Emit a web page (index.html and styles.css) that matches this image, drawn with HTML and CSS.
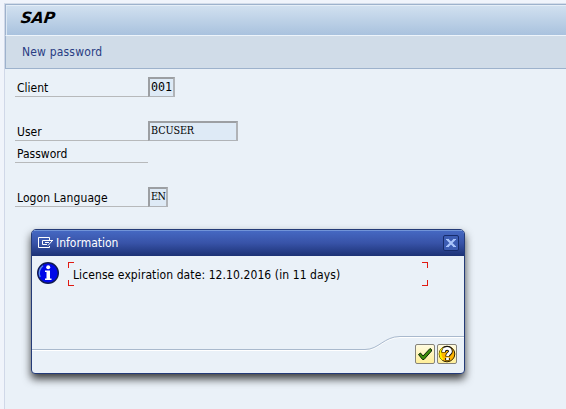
FILE: index.html
```html
<!DOCTYPE html>
<html lang="en">
<head>
<meta charset="utf-8">
<title>SAP</title>
<link rel="stylesheet" href="styles.css">
</head>
<body>
<main class="window">
  <header class="title-bar"><h1>SAP</h1></header>
  <nav class="toolbar"><span class="tool">New password</span></nav>
  <form class="logon">
    <div class="row"><label class="label">Client</label><span class="field w-client">001</span></div>
    <div class="row gap"><label class="label">User</label><span class="field w-user">BCUSER</span></div>
    <div class="row"><label class="label">Password</label></div>
    <div class="row gap"><label class="label lang">Logon Language</label><span class="field w-lang">EN</span></div>
  </form>
</main>
<section class="dialog" role="dialog">
  <header class="dialog-title">
    <svg class="exit-icon" width="16" height="12" viewBox="0 0 16 12" fill="none" stroke="#fff"><path d="M11.500 3V.5H.5v10h11V9"/><path d="M9 7.500H4.500v-4H15"/><path d="M14.500 3.500L10 8.500M7 5.500h4"/></svg>
    <span class="dialog-name">Information</span>
    <span class="close"><svg width="10" height="10" viewBox="0 0 10 10" fill="none" stroke="#a9c4fb" stroke-width="2.200"><path d="M1.500 1.500l7 7M8.500 1.500l-7 7"/><path d="M0 1.500h3M7 1.500h3M0 8.500h3M7 8.500h3" stroke-width="1"/></svg></span>
  </header>
  <div class="dialog-body">
    <svg class="info-icon" width="22" height="22" viewBox="0 0 22 22"><circle cx="11" cy="11" r="10.300" fill="#0008e8" stroke="#111b50" stroke-width="1.400"/><path d="M3.200 15A9 9 0 0 1 6 3.700" fill="none" stroke="#5c8fe8" stroke-width="1.300"/><circle cx="11.200" cy="5.200" r="2" fill="#fff"/><path d="M8 8.500h5v8h1.500V18H8v-1.500h1.500V10H8z" fill="#fff"/></svg>
    <div class="message">
      <span class="message-text">License expiration date: 12.10.2016 (in 11 days)</span>
      <svg class="corners" width="360" height="24" viewBox="0 0 360 24" fill="none" stroke="#e01a12" shape-rendering="crispEdges"><path d="M6 .5H.5V6M354 .5h5.500V6M.5 18v5.500H6M354 23.500h5.500V18"/></svg>
    </div>
  </div>
  <footer class="dialog-footer">
    <svg class="curve" width="432" height="17" viewBox="0 0 432 17" fill="none"><path d="M0 14.500H333C347 14.500 352 1.500 368 1.500H432" stroke="#fff"/><path d="M0 13.500H333C347 13.500 352 .5 368 .5H432" stroke="#a9b9cd"/></svg>
    <div class="buttons">
      <span class="button"><svg width="16" height="16" viewBox="0 0 16 16"><path d="M1.500 8.500L3.500 7l2.500 3L13 2.500l1.500 1v1.500L7 13.500H5.500z" fill="#3f8f0a" stroke="#0b2403"/></svg></span>
      <span class="button"><svg class="help-icon" width="18" height="18" viewBox="0 0 18 18"><circle cx="9" cy="9" r="7.800" fill="#ffb400" stroke="#332400"/><path d="M5 14.500A7 7 0 0 1 5 3.500" fill="none" stroke="#fff200" stroke-width="2"/><path d="M5.500 7.500C5.500 2.200 12.500 2.200 12.500 6.500 12.500 8.500 9.500 8.500 9.500 11.500M9.500 13v2.500" fill="none" stroke="#111" stroke-width="4.600"/><path d="M5.500 7C5.500 2.200 12.500 2.200 12.500 6.500 12.500 8.500 9.500 8.500 9.500 11M9.500 12.500v2.500" fill="none" stroke="#fff" stroke-width="2.800"/></svg></span>
    </div>
  </footer>
</section>
</body>
</html>
```
FILE: styles.css
```css
* { box-sizing: border-box; }
body {
  margin: 0;
  padding: 3px 0 0 4px;
  width: 566px;
  height: 409px;
  overflow: hidden;
  background: #f0f4fb;
  color: #000;
  font: 12px/16px "DejaVu Sans Condensed", "DejaVu Sans", sans-serif;
  font-stretch: condensed;
}
.window {
  height: 406px;
  background: #eaf1f8;
  border-left: 1px solid #d0d8e8;
  border-top: 1px solid #d3dce9;
}
.title-bar {
  height: 32px;
  border-top: 1px solid #9db2cc;
  border-left: 1px solid #9db2cc;
  border-bottom: 1px solid #edf4fb;
  box-shadow: inset 0 1px #e5eef7, inset 1px 0 #dbe7f3;
  background: linear-gradient(#d2e1f0, #a9c2de);
}
h1 {
  width: 60px;
  margin: 0;
  padding: 3px 0 0 15px;
  font: italic bold 15.500px/20px "DejaVu Sans", sans-serif;
  transform: skewX(-7deg);
}
.toolbar {
  height: 33px;
  border-left: 1px solid #9db2cc;
  border-bottom: 1px solid #9db2cc;
  background: #d0dce8;
  padding: 8px 0 0 16px;
  color: #293d83;
}
.tool { letter-spacing: 0.18px; }
.logon { padding: 8px 0 0 10px; }
.row { display: flex; height: 20px; }
.row + .row { margin-top: 2px; }
.row.gap { margin-top: 24px; }
.label {
  width: 133px;
  height: 20px;
  padding: 3px 0 0 2px;
  border-bottom: 1px solid #b7b9bb;
}
.lang { letter-spacing: 0.1px; }
.field {
  height: 20px;
  padding: 0 0 0 1px;
  border: 2px solid #9c9fa3;
  border-right-color: #b0b3b7;
  border-bottom: 1px solid #b0b3b7;
  background: #deeaf6;
  font: 10.700px/16px "DejaVu Serif", serif;
  font-stretch: condensed;
  white-space: nowrap;
}
.w-client {
  width: 27px;
  font: 11.660px/16px "DejaVu Sans Mono", monospace;
}
.w-user { width: 90px; letter-spacing: -0.1px; }
.w-lang { width: 20px; letter-spacing: -0.5px; }
.dialog {
  position: absolute;
  left: 31px;
  top: 229px;
  width: 434px;
  height: 145px;
  display: flex;
  flex-direction: column;
  border: 1px solid #243b78;
  border-radius: 5px 5px 4px 4px;
  background: #eaf1f8;
  box-shadow: 0 5px 9px 0 rgba(0, 0, 0, 0.75);
}
.dialog-title {
  height: 26px;
  flex: none;
  display: flex;
  align-items: center;
  padding: 0 5px 0 6px;
  color: #fff;
  background: linear-gradient(#7194d8 0 1px, #4568c2 1px, #3853a8 50%, #1c3275);
  border-radius: 4px 4px 0 0;
}
.dialog-name { margin-left: 2px; }
.close {
  display: flex;
  align-items: center;
  justify-content: center;
  width: 16px;
  height: 16px;
  margin-left: auto;
  border: 1px solid #172c6b;
  border-radius: 2px;
  background: #3c5cb3;
}
.dialog-body { display: flex; padding: 6px 0 0 5px; flex: 1; }
.message { position: relative; width: 360px; height: 24px; margin-left: 9px; padding: 5px 0 0 5px; }
.message-text { white-space: nowrap; letter-spacing: 0.09px; }
.corners { position: absolute; left: 0; top: 0; }
.dialog-footer { height: 37px; position: relative; }
.curve { position: absolute; left: 0; top: 0; }
.buttons { display: flex; gap: 2px; justify-content: flex-end; padding: 8px 7px 0 0; }
.button {
  display: flex;
  align-items: center;
  justify-content: center;
  width: 20px;
  height: 20px;
  border: 1px solid #85837a;
  border-radius: 2px;
  background: linear-gradient(#fffbe0, #ffef99);
}
.help-icon { flex: none; }
```
